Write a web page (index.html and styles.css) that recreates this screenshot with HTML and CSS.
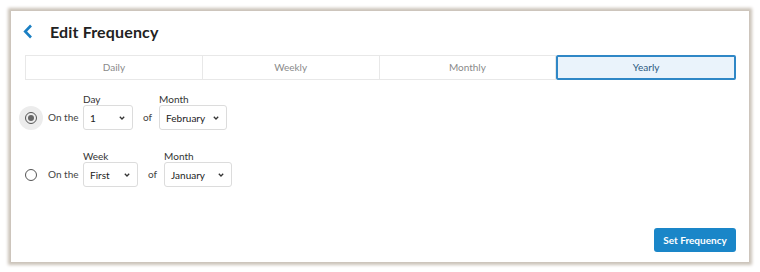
FILE: index.html
```html
<html>
<head>
<title>Edit Frequency</title>
<link rel="stylesheet" href="styles.css">
</head>
<body>

<div class="card">

  <div class="header">
    <svg class="back" width="10" height="15" viewBox="0 0 10 15">
      <path d="M8 1.5 L2.2 7.5 L8 13.5" fill="none" stroke="#1a7fc3" stroke-width="2.6"/>
    </svg>
    <h1>Edit Frequency</h1>
  </div>

  <div class="tabs">
    <div class="tab">Daily</div>
    <div class="tab">Weekly</div>
    <div class="tab">Monthly</div>
    <div class="tab active">Yearly</div>
  </div>

  <div class="row first">
    <div class="radio checked"><span class="ring"><span class="dot"></span></span></div>
    <span class="onthe">On the</span>
    <div class="field">
      <label>Day</label>
      <div class="select day"><span>1</span>
        <svg width="6" height="4" viewBox="0 0 6 4"><path d="M0.8 0.8 L3 3 L5.2 0.8" fill="none" stroke="#333" stroke-width="1.3"/></svg>
      </div>
    </div>
    <span class="of">of</span>
    <div class="field">
      <label>Month</label>
      <div class="select month"><span>February</span>
        <svg width="6" height="4" viewBox="0 0 6 4"><path d="M0.8 0.8 L3 3 L5.2 0.8" fill="none" stroke="#333" stroke-width="1.3"/></svg>
      </div>
    </div>
  </div>

  <div class="row second">
    <div class="radio"><span class="ring"></span></div>
    <span class="onthe">On the</span>
    <div class="field">
      <label>Week</label>
      <div class="select week"><span>First</span>
        <svg width="6" height="4" viewBox="0 0 6 4"><path d="M0.8 0.8 L3 3 L5.2 0.8" fill="none" stroke="#333" stroke-width="1.3"/></svg>
      </div>
    </div>
    <span class="of">of</span>
    <div class="field">
      <label>Month</label>
      <div class="select month"><span>January</span>
        <svg width="6" height="4" viewBox="0 0 6 4"><path d="M0.8 0.8 L3 3 L5.2 0.8" fill="none" stroke="#333" stroke-width="1.3"/></svg>
      </div>
    </div>
  </div>

  <div class="footer">
    <button class="button">Set Frequency</button>
  </div>

</div>

</body>
</html>
```

FILE: styles.css
```css
body {
  margin: 0;
  background-color: white;
  font-family: Lato, "Open Sans", sans-serif;
  color: #333;
}

.card {
  margin: 11px;
  height: 251px;
  box-sizing: border-box;
  padding: 10px 13px 10px 14px;
  background-color: white;
  box-shadow: 0 0 3px 3px #cbc3b9;
  display: flex;
  flex-direction: column;
}

.header {
  height: 20px;
  display: flex;
  align-items: center;
  margin-bottom: 14px;
}

.back {
  margin-left: -2px;
}

.header h1 {
  margin: 0 0 0 17px;
  font-size: 16px;
  font-weight: bold;
  color: #222;
  letter-spacing: 0.15px;
}

.tabs {
  display: flex;
  height: 25px;
}

.tab {
  flex: 1;
  display: flex;
  align-items: center;
  justify-content: center;
  font-size: 10px;
  color: #8a8a8a;
  border: 1px solid #e8e8e8;
  border-left: none;
  padding-bottom: 1px;
}

.tab:first-child {
  border-left: 1px solid #e8e8e8;
}

.tab.active {
  background-color: #eaf3fb;
  border: 2px solid #2f87c6;
  border-radius: 2px;
  color: #2a5a80;
}

.row {
  display: flex;
  align-items: flex-end;
  font-size: 10px;
}

.row.first {
  margin-top: 13px;
}

.row.second {
  margin-top: 20px;
}

.radio {
  width: 24px;
  height: 25px;
  margin-left: -6px;
  display: flex;
  align-items: center;
  justify-content: center;
}

.radio.checked .ring {
  box-shadow: 0 0 0 6px #ececec;
  background-color: #ececec;
}

.ring {
  width: 10px;
  height: 10px;
  border: 1.5px solid #555;
  border-radius: 50%;
  display: flex;
  align-items: center;
  justify-content: center;
}

.dot {
  width: 6px;
  height: 6px;
  border-radius: 50%;
  background-color: #666;
}

.onthe {
  line-height: 25px;
  margin-left: 5px;
  width: 35px;
  color: #444;
}

.of {
  line-height: 25px;
  margin: 0 7px 0 10px;
  color: #444;
}

.field {
  display: flex;
  flex-direction: column;
}

.field label {
  line-height: 12px;
  color: #333;
}

.select {
  height: 25px;
  box-sizing: border-box;
  border: 1px solid #dcdcdc;
  border-radius: 3px;
  display: flex;
  align-items: center;
  justify-content: space-between;
  padding: 0 7px 0 6px;
  color: #222;
}

.select.day {
  width: 50px;
}

.select.week {
  width: 55px;
}

.select.month {
  width: 68px;
}

.footer {
  margin-top: auto;
  display: flex;
  justify-content: flex-end;
}

.button {
  background-color: #1a86c8;
  border: none;
  color: white;
  width: 82px;
  height: 24px;
  border-radius: 3px;
  font-family: Lato, "Open Sans", sans-serif;
  font-size: 10px;
  font-weight: bold;
  padding: 0;
}
```
